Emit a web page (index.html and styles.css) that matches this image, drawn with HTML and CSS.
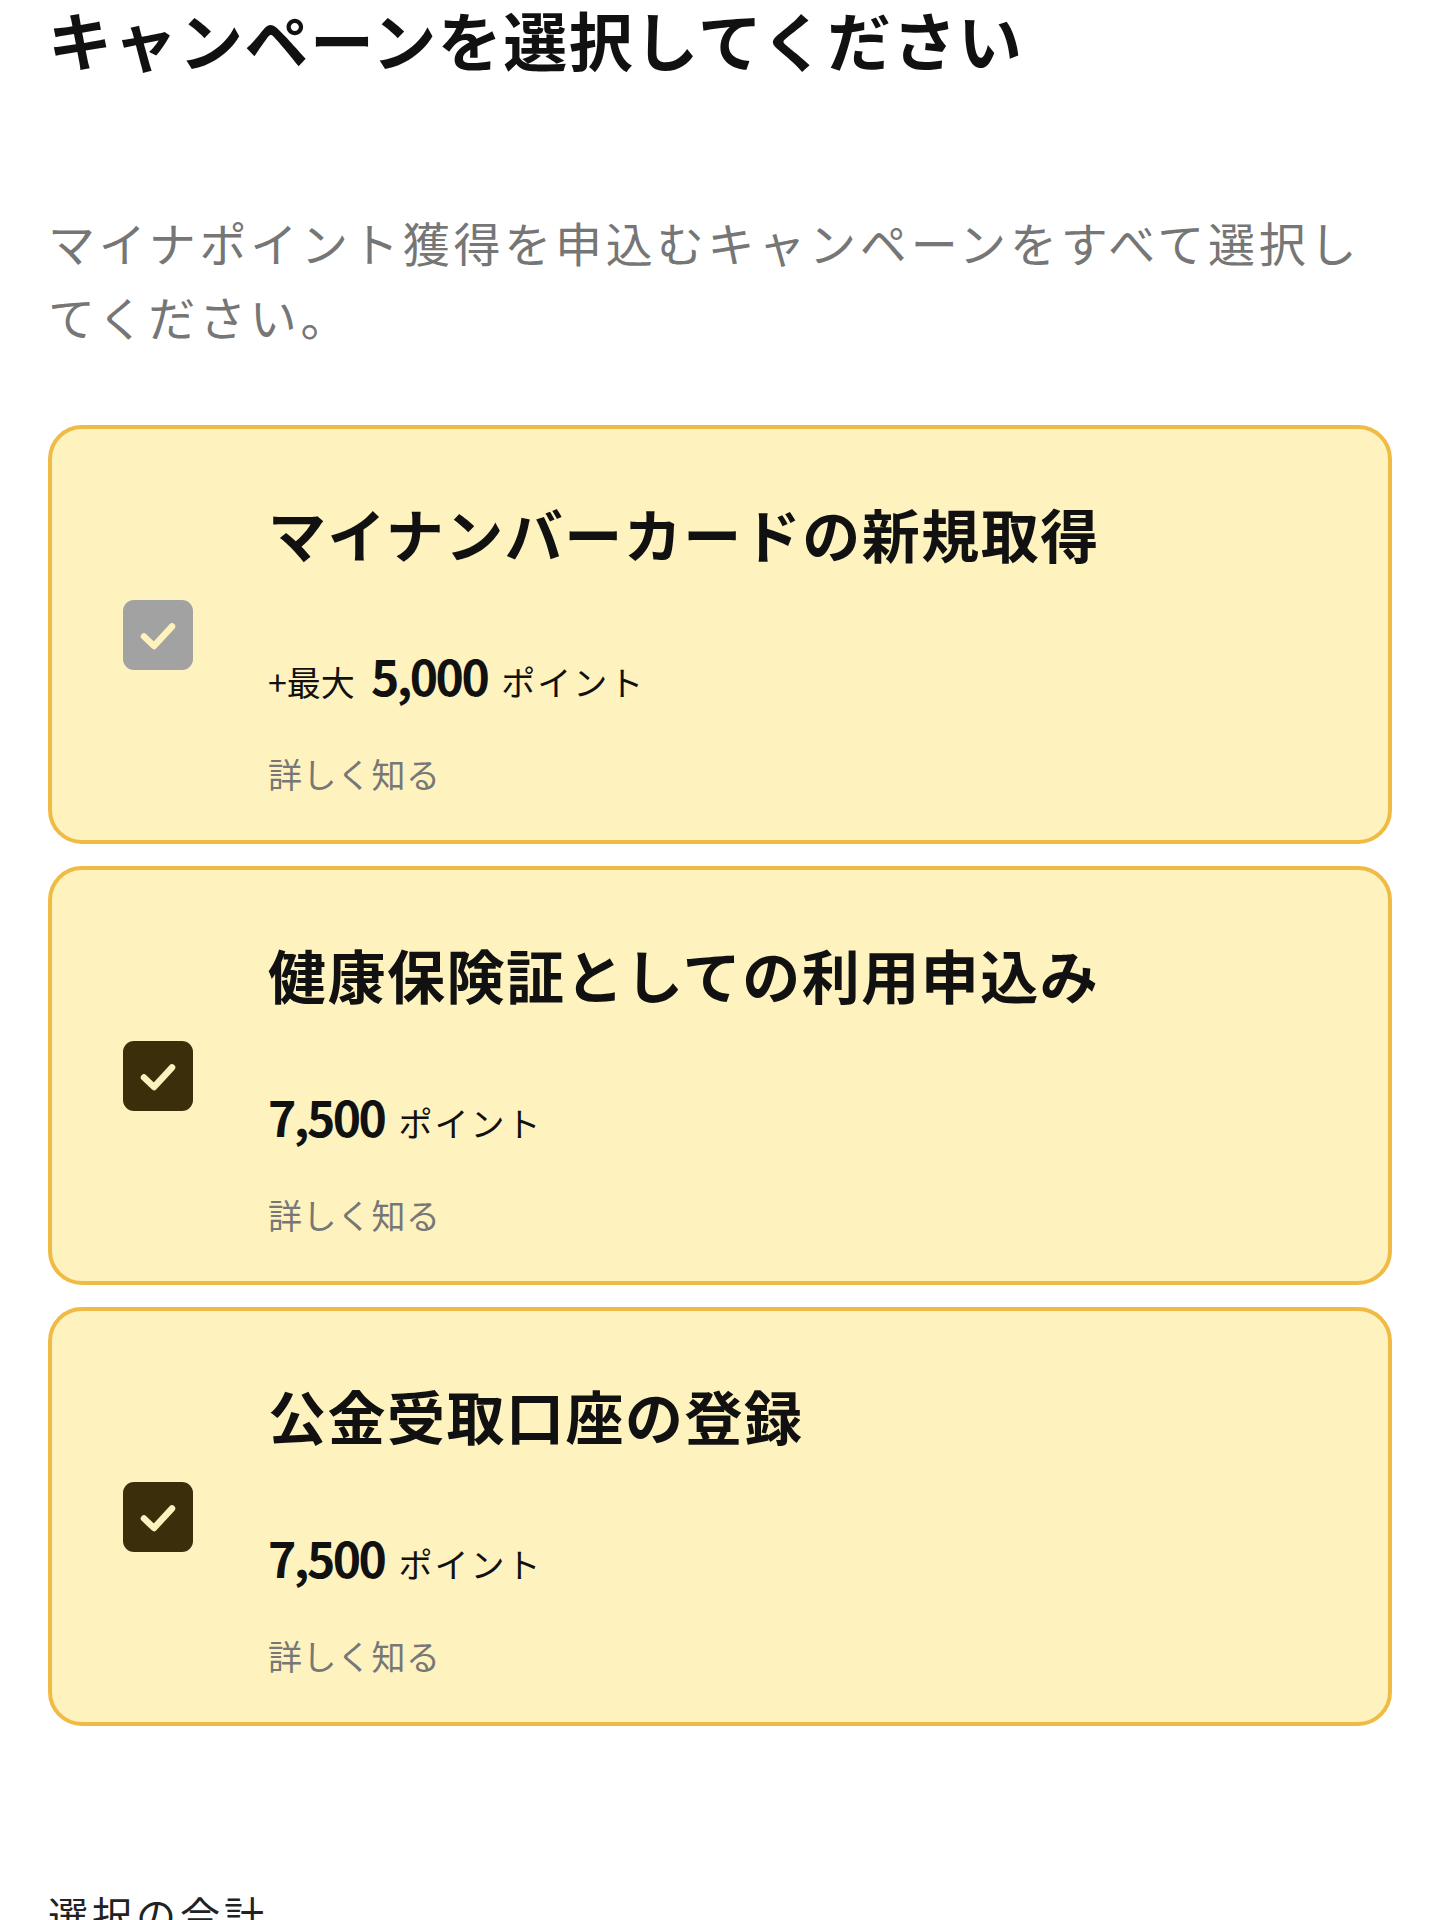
FILE: index.html
```html
<!DOCTYPE html>
<html lang="ja">
<head>
<meta charset="utf-8">
<title>キャンペーンを選択してください</title>
<link rel="stylesheet" href="styles.css">
</head>
<body>
<main class="page">
  <h1 class="page-title">キャンペーンを選択してください</h1>
  <p class="lead">マイナポイント獲得を申込むキャンペーンをすべて選択してください。</p>

  <ul class="campaigns">
    <li class="card">
      <span class="check check--disabled">
        <svg viewBox="0 0 70 70" width="70" height="70"><path d="M21 36.5L31 46L49 26.5" fill="none" stroke="#fdf2bd" stroke-width="6.5" stroke-linecap="round" stroke-linejoin="round"/></svg>
      </span>
      <div class="card-body">
        <h2 class="card-title">マイナンバーカードの新規取得</h2>
        <p class="points"><span class="pre">+最大</span><strong class="num">5,000</strong><span class="unit">ポイント</span></p>
        <a class="more">詳しく知る</a>
      </div>
    </li>
    <li class="card">
      <span class="check">
        <svg viewBox="0 0 70 70" width="70" height="70"><path d="M21 36.5L31 46L49 26.5" fill="none" stroke="#fdf2bd" stroke-width="6.5" stroke-linecap="round" stroke-linejoin="round"/></svg>
      </span>
      <div class="card-body">
        <h2 class="card-title">健康保険証としての利用申込み</h2>
        <p class="points"><strong class="num num--first">7,500</strong><span class="unit">ポイント</span></p>
        <a class="more">詳しく知る</a>
      </div>
    </li>
    <li class="card">
      <span class="check">
        <svg viewBox="0 0 70 70" width="70" height="70"><path d="M21 36.5L31 46L49 26.5" fill="none" stroke="#fdf2bd" stroke-width="6.5" stroke-linecap="round" stroke-linejoin="round"/></svg>
      </span>
      <div class="card-body">
        <h2 class="card-title">公金受取口座の登録</h2>
        <p class="points"><strong class="num num--first">7,500</strong><span class="unit">ポイント</span></p>
        <a class="more">詳しく知る</a>
      </div>
    </li>
  </ul>

  <h3 class="total-label">選択の合計</h3>
</main>
</body>
</html>
```

FILE: styles.css
```css
html, body {
  margin: 0;
  padding: 0;
  background: #ffffff;
}

body {
  font-family: "Noto Sans CJK JP", "Noto Sans", sans-serif;
  color: #111111;
}

.page {
  padding: 0 48px;
}

.page-title {
  margin: 0;
  font-size: 64px;
  line-height: 77px;
  font-weight: 700;
  letter-spacing: 1.5px;
  color: #111111;
}

.lead {
  margin: 128px 0 0;
  font-size: 47px;
  line-height: 74px;
  letter-spacing: 3.8px;
  color: #767676;
}

.campaigns {
  list-style: none;
  margin: 72px 0 0;
  padding: 0;
  display: flex;
  flex-direction: column;
  gap: 22px;
}

.card {
  display: flex;
  align-items: center;
  gap: 75px;
  padding: 0 40px 0 71px;
  background: #fef3bf;
  border: 4px solid #f0bb45;
  border-radius: 34px;
}

.check {
  flex: none;
  width: 70px;
  height: 70px;
  border-radius: 11px;
  background: #3a2e0b;
  display: flex;
  align-items: center;
  justify-content: center;
}

.check svg {
  display: block;
}

.check--disabled {
  background: #a2a2a2;
}

.card-body {
  display: flex;
  flex-direction: column;
  align-items: flex-start;
  padding: 64px 0 41px;
}

.card-title {
  margin: 0;
  font-size: 58px;
  line-height: 80px;
  font-weight: 700;
  letter-spacing: 1.5px;
  color: #111111;
}

.points {
  margin: 72px 0 0;
  line-height: 60px;
  font-size: 34px;
  color: #111111;
}

.points .pre {
  font-size: 34px;
}

.points .num {
  font-size: 48px;
  font-weight: 700;
  letter-spacing: -2.5px;
  margin: 0 14px 0 16px;
}

.points .num--first {
  margin-left: 0;
}

.points .unit {
  font-size: 34px;
  letter-spacing: 2px;
}

.more {
  margin-top: 37px;
  font-size: 34px;
  line-height: 50px;
  letter-spacing: 0.5px;
  color: #777777;
  text-decoration: none;
}

.total-label {
  margin: 158px 0 0;
  font-size: 40px;
  line-height: 60px;
  font-weight: 400;
  letter-spacing: 4px;
  color: #222222;
}
```
